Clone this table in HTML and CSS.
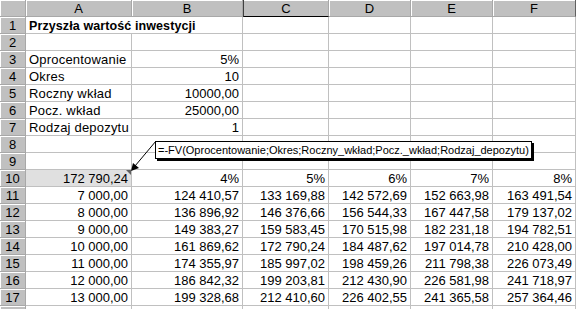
FILE: index.html
```html
<!DOCTYPE html>
<html lang="pl">
<head>
<meta charset="utf-8">
<title>Przyszła wartość inwestycji</title>
<link rel="stylesheet" href="styles.css">
</head>
<body>
<div class="sheet">
  <div class="grid">
    <div class="hd corner"></div>
    <div class="hd">A</div>
    <div class="hd">B</div>
    <div class="hd active">C</div>
    <div class="hd">D</div>
    <div class="hd">E</div>
    <div class="hd last">F</div>

    <div class="rh">1</div>
    <div class="c title">Przyszła wartość inwestycji</div>
    <div class="c"></div><div class="c"></div><div class="c"></div><div class="c"></div>

    <div class="rh">2</div>
    <div class="c"></div><div class="c"></div><div class="c"></div><div class="c"></div><div class="c"></div><div class="c"></div>

    <div class="rh">3</div>
    <div class="c">Oprocentowanie</div><div class="c n">5%</div><div class="c"></div><div class="c"></div><div class="c"></div><div class="c"></div>

    <div class="rh">4</div>
    <div class="c">Okres</div><div class="c n">10</div><div class="c"></div><div class="c"></div><div class="c"></div><div class="c"></div>

    <div class="rh">5</div>
    <div class="c">Roczny wkład</div><div class="c n">10000,00</div><div class="c"></div><div class="c"></div><div class="c"></div><div class="c"></div>

    <div class="rh">6</div>
    <div class="c">Pocz. wkład</div><div class="c n">25000,00</div><div class="c"></div><div class="c"></div><div class="c"></div><div class="c"></div>

    <div class="rh">7</div>
    <div class="c">Rodzaj depozytu</div><div class="c n">1</div><div class="c"></div><div class="c"></div><div class="c"></div><div class="c"></div>

    <div class="rh">8</div>
    <div class="c"></div><div class="c"></div><div class="c"></div><div class="c"></div><div class="c"></div><div class="c"></div>

    <div class="rh">9</div>
    <div class="c"></div><div class="c"></div><div class="c"></div><div class="c"></div><div class="c"></div><div class="c"></div>

    <div class="rh">10</div>
    <div class="c n noted">172 790,24</div><div class="c n">4%</div><div class="c n">5%</div><div class="c n">6%</div><div class="c n">7%</div><div class="c n">8%</div>

    <div class="rh">11</div>
    <div class="c n">7 000,00</div><div class="c n">124 410,57</div><div class="c n">133 169,88</div><div class="c n">142 572,69</div><div class="c n">152 663,98</div><div class="c n">163 491,54</div>

    <div class="rh">12</div>
    <div class="c n">8 000,00</div><div class="c n">136 896,92</div><div class="c n">146 376,66</div><div class="c n">156 544,33</div><div class="c n">167 447,58</div><div class="c n">179 137,02</div>

    <div class="rh">13</div>
    <div class="c n">9 000,00</div><div class="c n">149 383,27</div><div class="c n">159 583,45</div><div class="c n">170 515,98</div><div class="c n">182 231,18</div><div class="c n">194 782,51</div>

    <div class="rh">14</div>
    <div class="c n">10 000,00</div><div class="c n">161 869,62</div><div class="c n">172 790,24</div><div class="c n">184 487,62</div><div class="c n">197 014,78</div><div class="c n">210 428,00</div>

    <div class="rh">15</div>
    <div class="c n">11 000,00</div><div class="c n">174 355,97</div><div class="c n">185 997,02</div><div class="c n">198 459,26</div><div class="c n">211 798,38</div><div class="c n">226 073,49</div>

    <div class="rh">16</div>
    <div class="c n">12 000,00</div><div class="c n">186 842,32</div><div class="c n">199 203,81</div><div class="c n">212 430,90</div><div class="c n">226 581,98</div><div class="c n">241 718,97</div>

    <div class="rh">17</div>
    <div class="c n">13 000,00</div><div class="c n">199 328,68</div><div class="c n">212 410,60</div><div class="c n">226 402,55</div><div class="c n">241 365,58</div><div class="c n">257 364,46</div>

    <div class="rh"></div>
    <div class="c"></div><div class="c"></div><div class="c"></div><div class="c"></div><div class="c"></div><div class="c"></div>
  </div>

  <!-- formula tooltip for A10, with its leader arrow -->
  <svg class="leader" width="40" height="40" viewBox="0 0 40 40">
    <line x1="30" y1="0" x2="9" y2="25" stroke="#000" stroke-width="1"/>
    <polygon points="5,30 7,22 13,27" fill="#000"/>
  </svg>
  <div class="note">=-FV(Oprocentowanie;Okres;Roczny_wkład;Pocz._wkład;Rodzaj_depozytu)</div>
</div>
</body>
</html>
```

FILE: styles.css
```css
html, body {
  margin: 0;
  padding: 0;
  background: #fff;
}

body {
  width: 577px;
  height: 309px;
  overflow: hidden;
  font-family: "Liberation Sans", Arial, sans-serif;
  font-size: 13px;
  color: #000;
}

.sheet {
  position: relative;
}

.grid {
  display: grid;
  grid-template-columns: 26px 106px 111px 86px 82px 82px 83px;
  grid-auto-rows: 17px;
}

.grid > div {
  box-sizing: border-box;
  white-space: nowrap;
  overflow: hidden;
}

/* column and row headers */
.hd,
.rh {
  background: #c0c0c0;
  border-right: 1px solid #a8a8a8;
  border-bottom: 1px solid #a8a8a8;
  box-shadow: inset 1px 1px 0 #fff;
  text-align: center;
  line-height: 14px;
  padding-top: 2px;
}

.hd.active {
  border-left: 1px solid #404040;
  border-bottom: 1px solid #000;
  box-shadow: inset 0 1px 0 #fff;
}

.hd.last {
  border-right: 1px solid #606060;
}

/* ordinary cells */
.c {
  border-right: 1px solid #c0c0c0;
  border-bottom: 1px solid #c0c0c0;
  line-height: 14px;
  padding: 2px 2px 0 3px;
  letter-spacing: 0.2px;
}

.c.n {
  text-align: right;
  padding-right: 3px;
  letter-spacing: 0;
}

.c.title {
  grid-column: span 2;
  font-weight: bold;
  font-size: 12.5px;
  letter-spacing: 0.1px;
}

.c.noted {
  position: relative;
  background: #e0e0e0;
}

.c.noted::after {
  content: "";
  position: absolute;
  top: 0;
  right: 0;
  border-style: solid;
  border-width: 0 5px 5px 0;
  border-color: transparent #606060 transparent transparent;
}

/* comment tooltip */
.note {
  position: absolute;
  left: 155px;
  top: 141px;
  height: 18px;
  box-sizing: border-box;
  padding: 0 2px 0 2px;
  background: #fff;
  border: 1px solid #000;
  box-shadow: 2px 2px 0 #000;
  font-size: 11px;
  line-height: 16px;
  white-space: nowrap;
}

.leader {
  position: absolute;
  left: 126px;
  top: 141px;
  overflow: visible;
}
```
